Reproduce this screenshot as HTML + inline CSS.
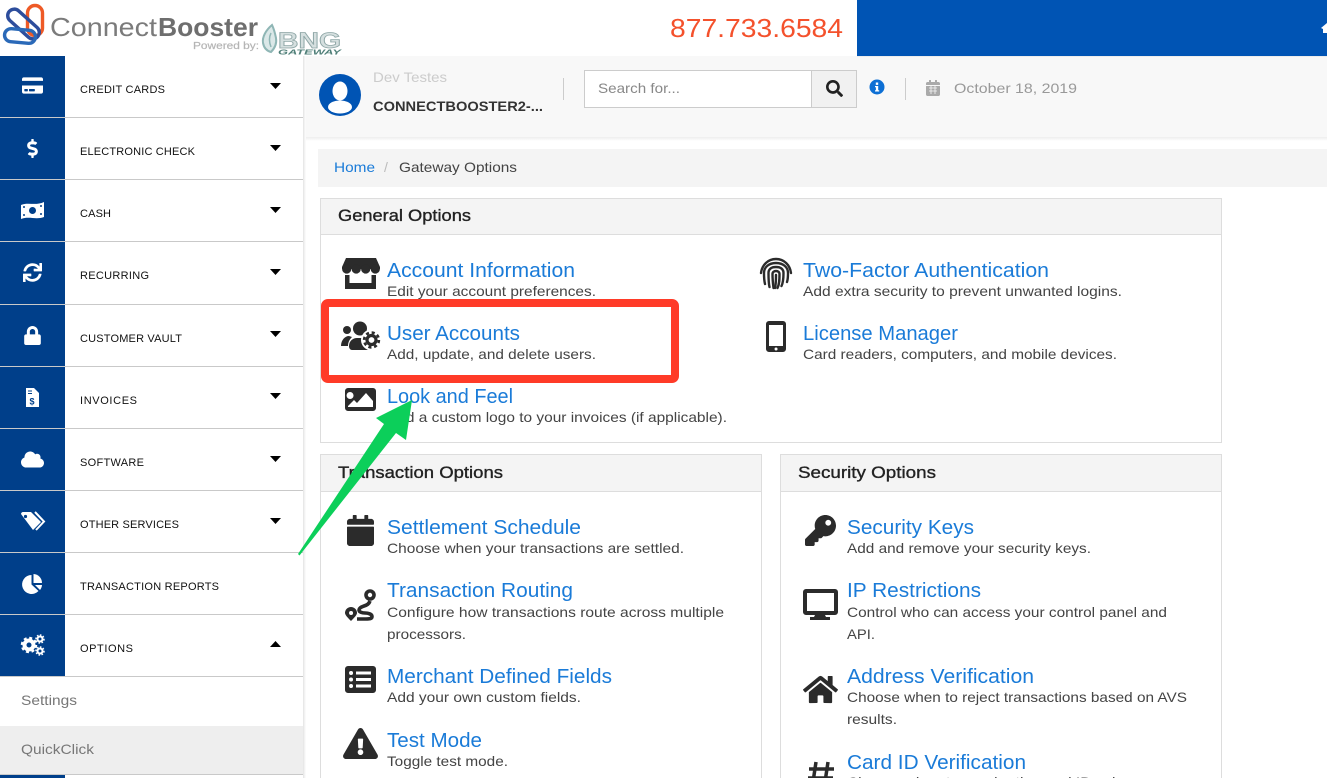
<!DOCTYPE html>
<html><head><meta charset="utf-8"><title>Gateway Options</title>
<style>
html,body{margin:0;padding:0;background:#fff;overflow:hidden}
svg{display:block}
text{font-family:"Liberation Sans",sans-serif}
.t{font-size:20px;fill:#1a7bd8}
.d{font-size:14px;fill:#444}
.h{font-size:17px;fill:#222;stroke:#222;stroke-width:.35px}
.s{font-size:11px;fill:#111}
</style></head><body>
<svg width="1327" height="778" viewBox="0 0 1327 778" xmlns="http://www.w3.org/2000/svg">
<defs>
<linearGradient id="sh" x1="0" x2="1" y1="0" y2="0"><stop offset="0" stop-color="#e4e4e4"/><stop offset="1" stop-color="#fff"/></linearGradient>
<linearGradient id="shv" x1="0" x2="0" y1="0" y2="1"><stop offset="0" stop-color="#eeeeee"/><stop offset="1" stop-color="#fff"/></linearGradient>
</defs>
<rect width="1327" height="778" fill="#fff"/>

<!-- top -->
<rect x="0" y="0" width="857" height="56" fill="#fff"/>
<rect x="857" y="0" width="470" height="56" fill="#0054b4"/>
<rect x="305" y="56" width="1022" height="81" fill="#f8f8f8"/>
<rect x="305" y="137" width="1022" height="4" fill="url(#shv)"/>
<rect x="857" y="56" width="470" height="1" fill="#ececec"/>
<path d="M1321 28L1327 23V33H1323V29z" fill="#fff"/>

<!-- logo -->
<g fill="none">
<rect x="27.500" y="5.500" width="15" height="30" rx="7.500" stroke="#ee5a26" stroke-width="3.400"/>
<rect x="4.500" y="17.500" width="38" height="13" rx="6.500" transform="rotate(42 23.500 24)" stroke="#2d4d9c" stroke-width="3.400"/>
<rect x="4.500" y="29.500" width="31" height="13" rx="6.500" transform="rotate(5 20 36)" stroke="#2a69b8" stroke-width="3.400"/>
</g>
<text x="50" y="36" font-size="26" fill="#7b7b7b" textLength="107" lengthAdjust="spacingAndGlyphs">Connect</text>
<text x="158" y="36" font-size="26" font-weight="700" fill="#6e6e6e" textLength="100" lengthAdjust="spacingAndGlyphs">Booster</text>
<text x="193" y="49" font-size="10" fill="#b5b5b5" stroke="#b5b5b5" stroke-width=".2" textLength="66" lengthAdjust="spacingAndGlyphs">Powered by:</text>
<path d="M272 25c-6 5-10 12-9 18 1 5 4 8 8 9 3-3 6-8 5-14-1-5-2-9-4-13z" fill="#dbe8e8" stroke="#8fb6b5" stroke-width="2"/>
<path d="M271 33c-2 4-2 9 0 14" fill="none" stroke="#8fb6b5" stroke-width="1.500"/>
<text x="278" y="48" font-size="22" font-weight="700" fill="#d5dfdf" stroke="#8fa7a7" stroke-width=".8" textLength="63" lengthAdjust="spacingAndGlyphs">BNG</text>
<text x="278" y="54.500" font-size="7" font-weight="700" font-style="italic" fill="#4f7f78" textLength="63" lengthAdjust="spacingAndGlyphs">GATEWAY</text>
<text x="670" y="37" font-size="26" fill="#f4512c" textLength="173" lengthAdjust="spacingAndGlyphs">877.733.6584</text>

<!-- sidebar -->
<rect x="303" y="56" width="3" height="722" fill="url(#sh)"/>
<rect x="0" y="56" width="65" height="722" fill="#003f8a"/>
<g fill="#c9c9c9">
<rect x="0" y="117" width="303" height="1"/><rect x="0" y="179" width="303" height="1"/><rect x="0" y="241" width="303" height="1"/><rect x="0" y="304" width="303" height="1"/><rect x="0" y="366" width="303" height="1"/><rect x="0" y="428" width="303" height="1"/><rect x="0" y="490" width="303" height="1"/><rect x="0" y="552" width="303" height="1"/><rect x="0" y="614" width="303" height="1"/><rect x="0" y="676" width="303" height="1"/>
</g>
<rect x="0" y="677" width="303" height="49" fill="#fff"/>
<rect x="0" y="726" width="303" height="48" fill="#eee"/>
<rect x="0" y="774" width="303" height="1" fill="#c9c9c9"/>
<rect x="65" y="775" width="238" height="3" fill="#fff"/>
<rect x="0" y="775" width="65" height="3" fill="#003f8a"/>

<text class="s" x="80" y="93" textLength="85">CREDIT CARDS</text>
<text class="s" x="80" y="155" textLength="115">ELECTRONIC CHECK</text>
<text class="s" x="80" y="217" textLength="31">CASH</text>
<text class="s" x="80" y="279" textLength="69">RECURRING</text>
<text class="s" x="80" y="342" textLength="102">CUSTOMER VAULT</text>
<text class="s" x="80" y="404" textLength="57">INVOICES</text>
<text class="s" x="80" y="466" textLength="64">SOFTWARE</text>
<text class="s" x="80" y="528" textLength="99">OTHER SERVICES</text>
<text class="s" x="80" y="590" textLength="139">TRANSACTION REPORTS</text>
<text class="s" x="80" y="652" textLength="53">OPTIONS</text>
<text x="21" y="705" font-size="14" fill="#777" textLength="56" lengthAdjust="spacingAndGlyphs">Settings</text>
<text x="21" y="754" font-size="14" fill="#777" textLength="73" lengthAdjust="spacingAndGlyphs">QuickClick</text>

<g fill="#000">
<path d="M270 83h11l-5.500 6z"/><path d="M270 145h11l-5.500 6z"/><path d="M270 207h11l-5.500 6z"/><path d="M270 269h11l-5.500 6z"/><path d="M270 331h11l-5.500 6z"/><path d="M270 393h11l-5.500 6z"/><path d="M270 456h11l-5.500 6z"/><path d="M270 518h11l-5.500 6z"/><path d="M270 647h11l-5.500-6z"/>
</g>

<!-- sidebar icons -->
<g fill="#fff">
<svg x="22" y="76" width="21" height="19" viewBox="0 0 576 512"><path fill="#fff" d="M0 432c0 26.500 21.500 48 48 48h480c26.500 0 48-21.500 48-48V256H0v176zm192-68c0-6.600 5.400-12 12-12h136c6.600 0 12 5.400 12 12v40c0 6.600-5.400 12-12 12H204c-6.600 0-12-5.400-12-12v-40zm-128 0c0-6.600 5.400-12 12-12h72c6.600 0 12 5.400 12 12v40c0 6.600-5.400 12-12 12H76c-6.600 0-12-5.400-12-12v-40zM576 80v48H0V80c0-26.500 21.500-48 48-48h480c26.500 0 48 21.500 48 48z"/></svg>
<svg x="27" y="139" width="11" height="19" viewBox="0 0 288 512"><path fill="#fff" d="M209.200 233.400l-108-31.600C88.700 198.200 80 186.500 80 173.500c0-16.300 13.200-29.500 29.500-29.500h66.300c12.200 0 24.200 3.700 34.200 10.500 6.100 4.100 14.300 3.100 19.500-2l34.800-34c7.100-6.900 6.100-18.400-1.800-24.500C238 74.800 207.400 64.100 176 64V16c0-8.800-7.200-16-16-16h-32c-8.800 0-16 7.200-16 16v48h-2.500C45.800 64-5.400 118.700.5 183.600c4.200 46.100 39.400 83.600 83.800 96.600l102.500 30c12.500 3.700 21.200 15.300 21.200 28.300 0 16.300-13.200 29.500-29.500 29.500h-66.300C100 368 88 364.300 78 357.500c-6.100-4.100-14.300-3.100-19.500 2l-34.800 34c-7.100 6.900-6.100 18.400 1.800 24.500 24.500 19.200 55.100 29.900 86.500 30v48c0 8.800 7.200 16 16 16h32c8.800 0 16-7.200 16-16v-48.200c46.600-.9 90.300-28.600 105.700-72.700 21.500-61.600-14.600-124.800-72.500-141.700z"/></svg>
<path d="M21 205c7-3 15 1 23-3v15c-8 3-15-1-23 2z"/>
<circle cx="32.500" cy="210.500" r="3.500" fill="#003f8a"/>
<circle cx="24" cy="207" r="1" fill="#003f8a"/><circle cx="41" cy="206" r="1" fill="#003f8a"/><circle cx="24" cy="215" r="1" fill="#003f8a"/><circle cx="41" cy="214" r="1" fill="#003f8a"/>
<svg x="23" y="263" width="19" height="19" viewBox="0 0 512 512"><path fill="#fff" d="M440.650 12.570l4 82.770A247.160 247.160 0 0 0 255.830 8C134.730 8 33.910 94.920 12.290 209.820A12 12 0 0 0 24.090 224h49.050a12 12 0 0 0 11.670-9.260 175.910 175.910 0 0 1 317-56.940l-101.460-4.860a12 12 0 0 0-12.570 12v47.410a12 12 0 0 0 12 12H500a12 12 0 0 0 12-12V12a12 12 0 0 0-12-12h-47.370a12 12 0 0 0-11.980 12.570zM255.830 432a175.610 175.610 0 0 1-146-77.800l101.800 4.870a12 12 0 0 0 12.570-12v-47.400a12 12 0 0 0-12-12H12a12 12 0 0 0-12 12V500a12 12 0 0 0 12 12h47.350a12 12 0 0 0 12-12.600l-4.150-82.570A247.170 247.170 0 0 0 255.830 504c121.110 0 221.930-86.920 243.550-201.820a12 12 0 0 0-11.800-14.180h-49.050a12 12 0 0 0-11.670 9.260A175.860 175.860 0 0 1 255.830 432z"/></svg>
<svg x="24" y="326" width="17" height="19" viewBox="0 0 448 512"><path fill="#fff" d="M400 224h-24v-72C376 68.200 307.800 0 224 0S72 68.200 72 152v72H48c-26.500 0-48 21.500-48 48v192c0 26.500 21.500 48 48 48h352c26.500 0 48-21.500 48-48V272c0-26.500-21.500-48-48-48zm-104 0H152v-72c0-39.700 32.300-72 72-72s72 32.300 72 72v72z"/></svg>
<path d="M26 388h8l5 5v14H26z"/>
<path d="M28 391h4M28 393.500h4" stroke="#003f8a" stroke-width="1"/>
<text x="29.500" y="404.500" font-size="9" font-weight="700" fill="#003f8a">$</text>
<svg x="21" y="450" width="23" height="19" viewBox="0 0 640 512"><path fill="#fff" d="M537.600 226.600c4.100-10.700 6.400-22.400 6.400-34.600 0-53-43-96-96-96-19.700 0-38.100 6-53.300 16.200C367 64.200 315.300 32 256 32c-88.400 0-160 71.600-160 160 0 2.700.1 5.400.2 8.100C40.200 219.800 0 273.200 0 336c0 79.500 64.500 144 144 144h368c70.700 0 128-57.300 128-128 0-61.900-44-113.600-102.400-125.400z"/></svg>
<path d="M21 514c0-1 1-2 2-2h8l10 10-8 8z" />
<circle cx="25.500" cy="516.500" r="1.600" fill="#003f8a"/>
<path d="M35 512l9 9.500-8 8.500" fill="none" stroke="#fff" stroke-width="2"/>
<path d="M31.500 575v9.500l7 6.500a9.500 9.500 0 1 1-7-16z"/>
<path d="M33.500 574a9 9 0 0 1 8.500 9h-8.500z"/><path d="M35 585h7a9 9 0 0 1-2 5z"/>
<circle cx="29" cy="645" r="4.500" fill="none" stroke="#fff" stroke-width="4"/>
<circle cx="29" cy="645" r="7" fill="none" stroke="#fff" stroke-width="2.500" stroke-dasharray="2.900 2.600"/>
<circle cx="40" cy="639" r="2.500" fill="none" stroke="#fff" stroke-width="2"/>
<circle cx="40" cy="639" r="4" fill="none" stroke="#fff" stroke-width="1.500" stroke-dasharray="1.600 1.500"/>
<circle cx="40" cy="651" r="2.500" fill="none" stroke="#fff" stroke-width="2"/>
<circle cx="40" cy="651" r="4" fill="none" stroke="#fff" stroke-width="1.500" stroke-dasharray="1.600 1.500"/>
</g>

<!-- user bar -->
<circle cx="340" cy="95" r="21" fill="#0054b4"/>
<ellipse cx="340" cy="91" rx="7.500" ry="9.500" fill="#fff"/>
<ellipse cx="340" cy="107" rx="12" ry="6.500" fill="#fff"/>
<text x="373" y="82" font-size="14" fill="#ccc" textLength="74" lengthAdjust="spacingAndGlyphs">Dev Testes</text>
<text x="373" y="111" font-size="14" font-weight="700" fill="#333" textLength="170" lengthAdjust="spacingAndGlyphs">CONNECTBOOSTER2-...</text>
<rect x="563" y="78" width="1" height="22" fill="#ccc"/>
<rect x="584.500" y="70.500" width="227" height="37" fill="#fff" stroke="#ccc"/>
<text x="598" y="93" font-size="14" fill="#888" textLength="82" lengthAdjust="spacingAndGlyphs">Search for...</text>
<rect x="811.500" y="70.500" width="45" height="37" fill="#f1f1f1" stroke="#ccc"/>
<svg x="826" y="80" width="17" height="17" viewBox="0 0 512 512"><path fill="#222" d="M505 442.700L405.300 343c-4.500-4.500-10.600-7-17-7H372c27.600-35.300 44-79.700 44-128C416 93.100 322.900 0 208 0S0 93.100 0 208s93.100 208 208 208c48.300 0 92.700-16.400 128-44v16.300c0 6.400 2.500 12.500 7 17l99.700 99.700c9.400 9.400 24.600 9.400 33.900 0l28.300-28.300c9.400-9.400 9.400-24.600.1-34zM208 336c-70.700 0-128-57.200-128-128 0-70.700 57.200-128 128-128 70.700 0 128 57.200 128 128 0 70.700-57.200 128-128 128z"/></svg>
<circle cx="877" cy="87" r="7.500" fill="#0d6fd4"/>
<rect x="875.800" y="82.500" width="2.400" height="2.400" fill="#fff"/><path d="M875 86h3.200v4.300h1v1.200H875v-1.200h.9V87.200H875z" fill="#fff"/>
<rect x="905" y="78" width="1" height="22" fill="#ccc"/>
<svg x="926" y="80" width="14" height="16" viewBox="0 0 448 512"><path fill="#aaa" d="M12 192h424c6.600 0 12 5.400 12 12v260c0 26.500-21.500 48-48 48H48c-26.500 0-48-21.500-48-48V204c0-6.600 5.400-12 12-12zm436-44v-36c0-26.500-21.500-48-48-48h-48V12c0-6.600-5.400-12-12-12h-40c-6.600 0-12 5.400-12 12v52H160V12c0-6.600-5.400-12-12-12h-40c-6.600 0-12 5.400-12 12v52H48C21.500 64 0 85.500 0 112v36c0 6.600 5.400 12 12 12h424c6.600 0 12-5.400 12-12z"/></svg>
<path d="M929 88h8M929 91h8M931 86v8M935 86v8" stroke="#f8f8f8" stroke-width=".8"/>
<text x="954" y="93" font-size="14" fill="#999" textLength="123" lengthAdjust="spacingAndGlyphs">October 18, 2019</text>

<!-- breadcrumb -->
<rect x="318" y="149" width="1009" height="38" fill="#f4f4f4"/>
<text x="334" y="172" font-size="14" fill="#1a7bd8" textLength="41" lengthAdjust="spacingAndGlyphs">Home</text>
<text x="384" y="172" font-size="14" fill="#bbb">/</text>
<text x="399" y="172" font-size="14" fill="#444" textLength="118" lengthAdjust="spacingAndGlyphs">Gateway Options</text>

<!-- cards -->
<rect x="320.500" y="198.500" width="901" height="244" fill="#fff" stroke="#ddd"/>
<rect x="321" y="199" width="900" height="35" fill="#f4f4f4"/><rect x="321" y="234" width="900" height="1" fill="#ddd"/>
<text class="h" x="338" y="221" textLength="133" lengthAdjust="spacingAndGlyphs">General Options</text>

<rect x="320.500" y="454.500" width="441" height="340" fill="#fff" stroke="#ddd"/>
<rect x="321" y="455" width="440" height="36" fill="#f4f4f4"/><rect x="321" y="491" width="440" height="1" fill="#ddd"/>
<text class="h" x="338" y="478" textLength="165" lengthAdjust="spacingAndGlyphs">Transaction Options</text>

<rect x="780.500" y="454.500" width="441" height="340" fill="#fff" stroke="#ddd"/>
<rect x="781" y="455" width="440" height="36" fill="#f4f4f4"/><rect x="781" y="491" width="440" height="1" fill="#ddd"/>
<text class="h" x="798" y="478" textLength="138" lengthAdjust="spacingAndGlyphs">Security Options</text>

<!-- general items -->
<text class="t" x="387" y="277" textLength="188" lengthAdjust="spacingAndGlyphs">Account Information</text>
<text class="d" x="387" y="296" textLength="209" lengthAdjust="spacingAndGlyphs">Edit your account preferences.</text>
<text class="t" x="387" y="340" textLength="133" lengthAdjust="spacingAndGlyphs">User Accounts</text>
<text class="d" x="387" y="359" textLength="209" lengthAdjust="spacingAndGlyphs">Add, update, and delete users.</text>
<text class="t" x="387" y="403" textLength="126" lengthAdjust="spacingAndGlyphs">Look and Feel</text>
<text class="d" x="387" y="422" textLength="340" lengthAdjust="spacingAndGlyphs">Add a custom logo to your invoices (if applicable).</text>
<text class="t" x="803" y="277" textLength="246" lengthAdjust="spacingAndGlyphs">Two-Factor Authentication</text>
<text class="d" x="803" y="296" textLength="319" lengthAdjust="spacingAndGlyphs">Add extra security to prevent unwanted logins.</text>
<text class="t" x="803" y="340" textLength="155" lengthAdjust="spacingAndGlyphs">License Manager</text>
<text class="d" x="803" y="359" textLength="314" lengthAdjust="spacingAndGlyphs">Card readers, computers, and mobile devices.</text>

<!-- transaction items -->
<text class="t" x="387" y="534" textLength="194" lengthAdjust="spacingAndGlyphs">Settlement Schedule</text>
<text class="d" x="387" y="553" textLength="297" lengthAdjust="spacingAndGlyphs">Choose when your transactions are settled.</text>
<text class="t" x="387" y="597" textLength="186" lengthAdjust="spacingAndGlyphs">Transaction Routing</text>
<text class="d" x="387" y="617" textLength="337" lengthAdjust="spacingAndGlyphs">Configure how transactions route across multiple</text>
<text class="d" x="387" y="639" textLength="79" lengthAdjust="spacingAndGlyphs">processors.</text>
<text class="t" x="387" y="683" textLength="225" lengthAdjust="spacingAndGlyphs">Merchant Defined Fields</text>
<text class="d" x="387" y="702" textLength="194" lengthAdjust="spacingAndGlyphs">Add your own custom fields.</text>
<text class="t" x="387" y="747" textLength="95" lengthAdjust="spacingAndGlyphs">Test Mode</text>
<text class="d" x="387" y="766" textLength="121" lengthAdjust="spacingAndGlyphs">Toggle test mode.</text>

<!-- security items -->
<text class="t" x="847" y="534" textLength="127" lengthAdjust="spacingAndGlyphs">Security Keys</text>
<text class="d" x="847" y="553" textLength="244" lengthAdjust="spacingAndGlyphs">Add and remove your security keys.</text>
<text class="t" x="847" y="597" textLength="134" lengthAdjust="spacingAndGlyphs">IP Restrictions</text>
<text class="d" x="847" y="617" textLength="320" lengthAdjust="spacingAndGlyphs">Control who can access your control panel and</text>
<text class="d" x="847" y="639" textLength="28" lengthAdjust="spacingAndGlyphs">API.</text>
<text class="t" x="847" y="683" textLength="187" lengthAdjust="spacingAndGlyphs">Address Verification</text>
<text class="d" x="847" y="702" textLength="340" lengthAdjust="spacingAndGlyphs">Choose when to reject transactions based on AVS</text>
<text class="d" x="847" y="724" textLength="50" lengthAdjust="spacingAndGlyphs">results.</text>
<text class="t" x="847" y="769" textLength="179" lengthAdjust="spacingAndGlyphs">Card ID Verification</text>
<text class="d" x="847" y="787" textLength="290" lengthAdjust="spacingAndGlyphs">Choose when to require the card ID value.</text>

<!-- dark icons -->
<g fill="#2b2b2b">
<!-- store -->
<path d="M346 258H376L380 267V269H342V267z"/>
<circle cx="346.700" cy="269" r="4.600"/><circle cx="356.200" cy="269" r="4.600"/><circle cx="365.700" cy="269" r="4.600"/><circle cx="375.300" cy="269" r="4.600"/>
<path d="M345 275h4.500v8h22v-8h4.500v14h-31z"/>
<!-- users-cog -->
<circle cx="347" cy="330" r="4"/><path d="M341 346c0-6 4-10 8-10l3 1c-3 3-4 6-4 9z"/>
<circle cx="360" cy="328.500" r="7"/><path d="M349 346c0-5 4-8 8-8h7c3 0 5 1 6 3v9h-18c-2 0-3-2-3-4z"/>
<circle cx="371.500" cy="340" r="10.500" fill="#fff"/>
<circle cx="371.500" cy="340" r="4.500" fill="none" stroke="#2b2b2b" stroke-width="3.200"/>
<circle cx="371.500" cy="340" r="7.400" fill="none" stroke="#2b2b2b" stroke-width="2.600" stroke-dasharray="3.100 2.700"/>
<!-- image -->
<path fill-rule="evenodd" d="M348 388h25a3 3 0 0 1 3 3v17a3 3 0 0 1-3 3h-25a3 3 0 0 1-3-3v-17a3 3 0 0 1 3-3zm2 4a3.500 3.500 0 1 0 .1 7 3.500 3.500 0 0 0-.1-7zm-2 15h25v-6l-7-8-9 10-3-3-6 6z"/>
<!-- calendar -->
<svg x="347" y="515" width="27" height="31" viewBox="0 0 448 512" preserveAspectRatio="none"><path fill="#2b2b2b" d="M12 192h424c6.600 0 12 5.400 12 12v260c0 26.500-21.500 48-48 48H48c-26.500 0-48-21.500-48-48V204c0-6.600 5.400-12 12-12zm436-44v-36c0-26.500-21.500-48-48-48h-48V12c0-6.600-5.400-12-12-12h-40c-6.600 0-12 5.400-12 12v52H160V12c0-6.600-5.400-12-12-12h-40c-6.600 0-12 5.400-12 12v52H48C21.500 64 0 85.500 0 112v36c0 6.600 5.400 12 12 12h424c6.600 0 12-5.400 12-12z"/></svg>
<!-- route -->
<circle cx="370" cy="595" r="4" fill="none" stroke="#2b2b2b" stroke-width="3.600"/>
<path d="M370 601c-1 3-3 4-6 5s-5 2-5 4 3 3 6 3 7 1 7 3.500-3 2.500-6 2.500h-9" fill="none" stroke="#2b2b2b" stroke-width="3.600"/>
<path fill-rule="evenodd" d="M351 607a6 6 0 0 1 6 6c0 2-3 5-6 8-3-3-6-6-6-8a6 6 0 0 1 6-6zm0 4a2 2 0 1 0 .1 4 2 2 0 0 0-.1-4z"/>
<!-- list -->
<path fill-rule="evenodd" d="M348 666h25a3 3 0 0 1 3 3v21a3 3 0 0 1-3 3h-25a3 3 0 0 1-3-3v-21a3 3 0 0 1 3-3zm3 5a2 2 0 1 0 .1 4 2 2 0 0 0-.1-4zm0 6.500a2 2 0 1 0 .1 4 2 2 0 0 0-.1-4zm0 6.500a2 2 0 1 0 .1 4 2 2 0 0 0-.1-4zm5-12.500v3h15v-3zm0 6.500v3h15v-3zm0 6.500v3h15v-3z"/>
<!-- warning -->
<svg x="343" y="728" width="35" height="31" viewBox="0 0 576 512"><path fill="#2b2b2b" d="M569.517 440.013C587.975 472.007 564.806 512 527.940 512H48.054c-36.937 0-59.999-40.055-41.577-71.987L246.423 23.985c18.467-32.009 64.720-31.951 83.154 0l239.940 416.028zM288 354c-25.405 0-46 20.595-46 46s20.595 46 46 46 46-20.595 46-46-20.595-46-46-46zm-43.673-165.346l7.418 136c.347 6.364 5.609 11.346 11.982 11.346h48.546c6.373 0 11.635-4.982 11.982-11.346l7.418-136c.375-6.874-5.098-12.654-11.982-12.654h-63.383c-6.884 0-12.356 5.780-11.981 12.654z"/></svg>
<!-- key -->
<svg x="805" y="515" width="31" height="31" viewBox="0 0 512 512"><path fill="#2b2b2b" d="M512 176.001C512 273.203 433.202 352 336 352c-11.220 0-22.190-1.062-32.827-3.069l-24.012 27.014A23.999 23.999 0 0 1 261.223 384H224v40c0 13.255-10.745 24-24 24h-40v40c0 13.255-10.745 24-24 24H24c-13.255 0-24-10.745-24-24v-78.059c0-6.365 2.529-12.470 7.029-16.971l161.802-161.802C163.108 213.814 160 195.271 160 176 160 78.798 238.797.001 335.999 0 433.488-.001 512 78.511 512 176.001zM336 128c0 26.510 21.490 48 48 48s48-21.490 48-48-21.490-48-48-48-48 21.490-48 48z"/></svg>
<!-- desktop -->
<path fill-rule="evenodd" d="M806 589h29a3 3 0 0 1 3 3v20a3 3 0 0 1-3 3h-10l1 2h4v3h-20v-3h4l1-2h-9a3 3 0 0 1-3-3v-20a3 3 0 0 1 3-3zm1 4v18h27v-18z"/>
<!-- home -->
<svg x="803" y="674" width="35" height="31" viewBox="0 0 576 512"><path fill="#2b2b2b" d="M280.370 148.260L96 300.110V464a16 16 0 0 0 16 16l112.060-.29a16 16 0 0 0 15.920-16V368a16 16 0 0 1 16-16h64a16 16 0 0 1 16 16v95.640a16 16 0 0 0 16 16.050L464 480a16 16 0 0 0 16-16V300L295.670 148.260a12.190 12.190 0 0 0-15.300 0zM571.600 251.470L488 182.560V44.050a12 12 0 0 0-12-12h-56a12 12 0 0 0-12 12v72.610L318.470 43a48 48 0 0 0-61 0L4.340 251.470a12 12 0 0 0-1.600 16.900l25.500 31A12 12 0 0 0 45.150 301l235.220-193.740a12.190 12.190 0 0 1 15.300 0L530.900 301a12 12 0 0 0 16.900-1.600l25.500-31a12 12 0 0 0-1.700-16.930z"/></svg>
<!-- hash -->
<path d="M816 762l-3 20M828 762l-3 20M809 769h25M808 778h25" stroke="#2b2b2b" stroke-width="3.500" fill="none"/>
<!-- fingerprint -->
<g fill="none" stroke="#2b2b2b" stroke-width="2.400" stroke-linecap="round">
<path d="M761 273c1-8 7-14 15-14s14 6 15 14"/>
<path d="M765 284c-1-4-1-8-1-11 0-6 5-10 12-10s12 4 12 10c0 3 0 6-1 9"/>
<path d="M769.500 287c-1-4-1-9-1-14 0-4 3-6 7.500-6s7.500 2 7.500 6c0 4 0 9-2 13"/>
<path d="M773.500 288c-.5-4-1-9-1-14 0-2 1.500-3 3.500-3s3.500 1 3.500 3c0 5 0 10-2 14"/>
<path d="M776 275c0 5 0 9-1 13"/>
</g>
<!-- mobile -->
<path fill-rule="evenodd" d="M769 321h14a3 3 0 0 1 3 3v25a3 3 0 0 1-3 3h-14a3 3 0 0 1-3-3v-25a3 3 0 0 1 3-3zm0 4v21h14v-21zm7 22.500a1.500 1.500 0 1 0 .1 3 1.500 1.500 0 0 0-.1-3z"/>
</g>

<!-- annotation -->
<rect x="325" y="303" width="350" height="76" rx="3" fill="none" stroke="#ff3b28" stroke-width="8"/>
<path d="M412 400L376 418 384 424 298 554 299.500 555.500 396 433 406 440z" fill="#0ccf5a"/>
</svg>
</body></html>
